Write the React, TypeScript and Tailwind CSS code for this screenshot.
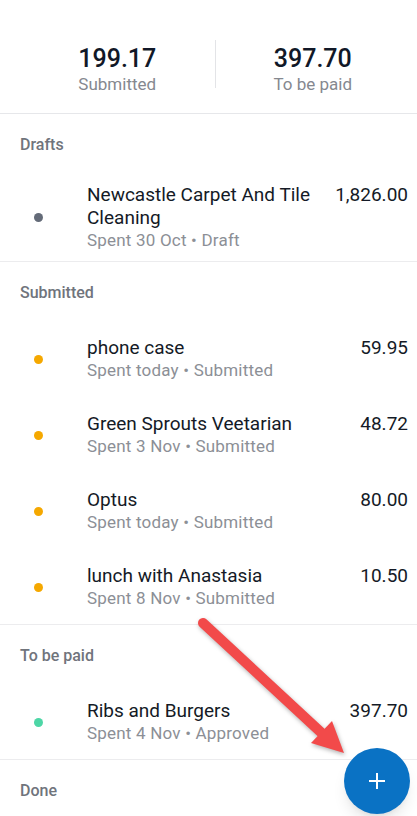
import React from 'react';

type Expense = {
  id: string;
  title: string;
  sub: string;
  amount: string;
  dot: string;
};

const sections: { name: string; items: Expense[] }[] = [
  {
    name: 'Drafts',
    items: [
      { id: 'd1', title: 'Newcastle Carpet And Tile Cleaning', sub: 'Spent 30 Oct • Draft', amount: '1,826.00', dot: 'bg-[#646b78]' },
    ],
  },
  {
    name: 'Submitted',
    items: [
      { id: 's1', title: 'phone case', sub: 'Spent today • Submitted', amount: '59.95', dot: 'bg-[#f5a800]' },
      { id: 's2', title: 'Green Sprouts Veetarian', sub: 'Spent 3 Nov • Submitted', amount: '48.72', dot: 'bg-[#f5a800]' },
      { id: 's3', title: 'Optus', sub: 'Spent today • Submitted', amount: '80.00', dot: 'bg-[#f5a800]' },
      { id: 's4', title: 'lunch with Anastasia', sub: 'Spent 8 Nov • Submitted', amount: '10.50', dot: 'bg-[#f5a800]' },
    ],
  },
  {
    name: 'To be paid',
    items: [
      { id: 'p1', title: 'Ribs and Burgers', sub: 'Spent 4 Nov • Approved', amount: '397.70', dot: 'bg-[#4dd6a6]' },
    ],
  },
  { name: 'Done', items: [] },
];

function Row({ item }: { item: Expense }) {
  return (
    <div className="flex items-center min-h-[76px] pt-[11px] pb-[9px]">
      <div className="w-[87px] shrink-0 pl-[34px]">
        <div className={`w-[9px] h-[9px] rounded-full ${item.dot}`} />
      </div>
      <div className="flex-1 min-w-0 flex items-start">
        <div className="flex-1 min-w-0">
          <div className="text-[19px] leading-[23px] text-[#141a26]">{item.title}</div>
          <div className="text-[17px] leading-[23px] tracking-[0.2px] text-[#8c8f96]">{item.sub}</div>
        </div>
        <div className="pl-4 pr-[9px] text-[19px] leading-[23px] text-[#141a26]">{item.amount}</div>
      </div>
    </div>
  );
}

export default function App() {
  return (
    <div className="relative w-[417px] h-[816px] overflow-hidden bg-white" style={{ fontFamily: 'Roboto, "Liberation Sans", sans-serif' }}>
      <div className="flex h-[114px] pl-5 pr-[7px] border-b border-[#e6e7ea]">
        <div className="flex-1 flex flex-col items-center pt-[45px]">
          <div className="text-[25px] leading-[28px] font-medium text-[#111827]">199.17</div>
          <div className="text-[17px] leading-[22px] text-[#85888f]">Submitted</div>
        </div>
        <div className="w-px h-[48px] mt-[40px] bg-[#e3e4e7]" />
        <div className="flex-1 flex flex-col items-center pt-[45px]">
          <div className="text-[25px] leading-[28px] font-medium text-[#111827]">397.70</div>
          <div className="text-[17px] leading-[22px] text-[#85888f]">To be paid</div>
        </div>
      </div>

      {sections.map((s) => (
        <div key={s.name} className="border-b border-[#ececee]">
          <div className="h-[58px] flex items-center pt-[4px] pl-5 text-[16px] font-medium text-[#70747c]">{s.name}</div>
          {s.items.map((it) => (
            <Row key={it.id} item={it} />
          ))}
        </div>
      ))}

      <svg className="absolute left-0 top-0 pointer-events-none" width="417" height="816" style={{ filter: 'drop-shadow(1px 2px 2px rgba(0,0,0,0.3))' }}>
        <line x1="203" y1="623" x2="326" y2="737" stroke="#f24a4a" strokeWidth="10" strokeLinecap="round" />
        <polygon points="311,743 332,721 344,753" fill="#f24a4a" />
      </svg>

      <button className="absolute right-[7px] bottom-[2px] w-[66px] h-[66px] rounded-full bg-[#0a72c4] flex items-center justify-center shadow-lg">
        <svg width="18" height="18" viewBox="0 0 18 18">
          <path d="M9 1v16M1 9h16" stroke="white" strokeWidth="2" />
        </svg>
      </button>
    </div>
  );
}
